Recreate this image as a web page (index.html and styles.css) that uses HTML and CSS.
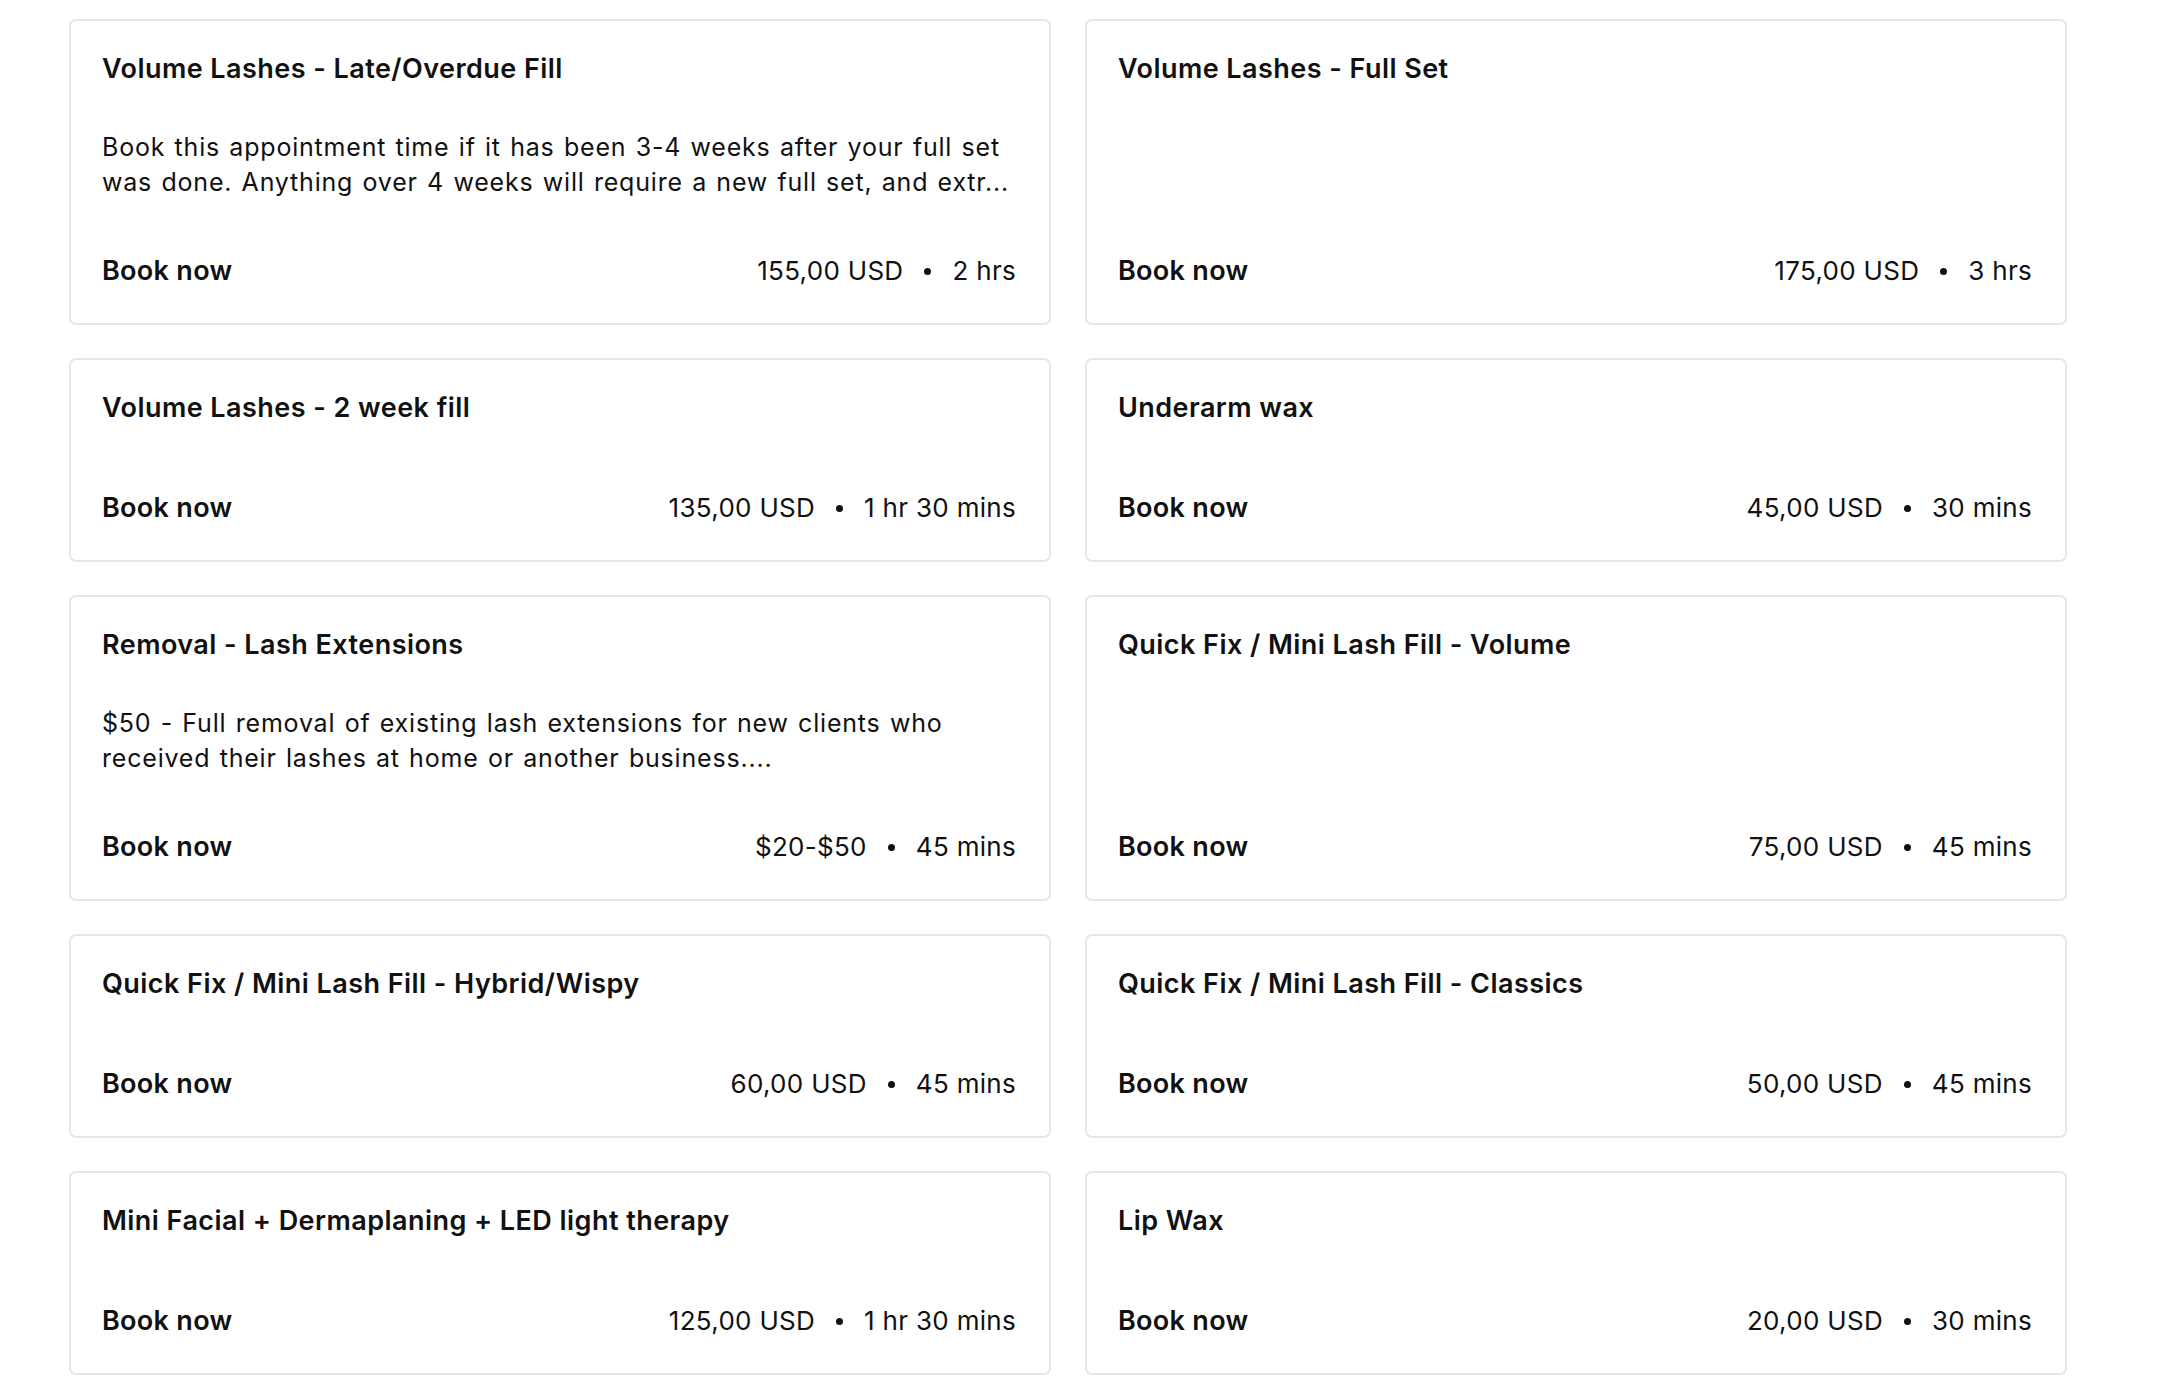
FILE: index.html
```html
<!DOCTYPE html>
<html>
<head>
<meta charset="utf-8">
<link rel="stylesheet" href="styles.css">
</head>
<body>
<div class="grid">
  <div class="card">
    <div class="title">Volume Lashes - Late/Overdue Fill</div>
    <div class="desc">Book this appointment time if it has been 3-4 weeks after your full set was done. Anything over 4 weeks will require a new full set, and extr...</div>
    <div class="footer"><span class="book">Book now</span><span class="meta">155,00 USD<span class="dot"></span>2 hrs</span></div>
  </div>
  <div class="card">
    <div class="title">Volume Lashes - Full Set</div>
    <div class="desc empty"></div>
    <div class="footer"><span class="book">Book now</span><span class="meta">175,00 USD<span class="dot"></span>3 hrs</span></div>
  </div>
  <div class="card">
    <div class="title">Volume Lashes - 2 week fill</div>
    <div class="footer"><span class="book">Book now</span><span class="meta">135,00 USD<span class="dot"></span>1 hr 30 mins</span></div>
  </div>
  <div class="card">
    <div class="title">Underarm wax</div>
    <div class="footer"><span class="book">Book now</span><span class="meta">45,00 USD<span class="dot"></span>30 mins</span></div>
  </div>
  <div class="card">
    <div class="title">Removal - Lash Extensions</div>
    <div class="desc">$50 - Full removal of existing lash extensions for new clients who received their lashes at home or another business....</div>
    <div class="footer"><span class="book">Book now</span><span class="meta">$20-$50<span class="dot"></span>45 mins</span></div>
  </div>
  <div class="card">
    <div class="title">Quick Fix / Mini Lash Fill - Volume</div>
    <div class="desc empty"></div>
    <div class="footer"><span class="book">Book now</span><span class="meta">75,00 USD<span class="dot"></span>45 mins</span></div>
  </div>
  <div class="card">
    <div class="title">Quick Fix / Mini Lash Fill - Hybrid/Wispy</div>
    <div class="footer"><span class="book">Book now</span><span class="meta">60,00 USD<span class="dot"></span>45 mins</span></div>
  </div>
  <div class="card">
    <div class="title">Quick Fix / Mini Lash Fill - Classics</div>
    <div class="footer"><span class="book">Book now</span><span class="meta">50,00 USD<span class="dot"></span>45 mins</span></div>
  </div>
  <div class="card">
    <div class="title">Mini Facial + Dermaplaning + LED light therapy</div>
    <div class="footer"><span class="book">Book now</span><span class="meta">125,00 USD<span class="dot"></span>1 hr 30 mins</span></div>
  </div>
  <div class="card">
    <div class="title">Lip Wax</div>
    <div class="footer"><span class="book">Book now</span><span class="meta">20,00 USD<span class="dot"></span>30 mins</span></div>
  </div>
</div>
</body>
</html>
```
FILE: styles.css
```css
html, body {
  margin: 0;
  padding: 0;
  background: #ffffff;
}
body {
  font-family: "Inter", "Liberation Sans", sans-serif;
  color: #111111;
}
.grid {
  display: grid;
  grid-template-columns: 982px 982px;
  column-gap: 34px;
  row-gap: 33px;
  margin: 19px 0 0 69px;
  width: 1998px;
  align-items: start;
}
.card {
  border: 2px solid #e6e6e6;
  border-radius: 7px;
  padding: 30px 33px 35px 31px;
  display: flex;
  flex-direction: column;
}
.title {
  font-size: 27px;
  font-weight: 600;
  line-height: 35px;
  letter-spacing: 0.45px;
  white-space: nowrap;
}
.desc {
  margin-top: 44px;
  font-size: 25px;
  line-height: 35px;
  letter-spacing: 0.8px;
  word-spacing: 1.5px;
  height: 70px;
  overflow: hidden;
}
.footer {
  margin-top: 66px;
  display: flex;
  justify-content: space-between;
  align-items: center;
  line-height: 34px;
}
.desc + .footer {
  margin-top: 54px;
}
.book {
  font-size: 27px;
  font-weight: 600;
  letter-spacing: 0.3px;
}
.meta {
  font-size: 26px;
  font-weight: 400;
  letter-spacing: 0.3px;
  display: flex;
  align-items: center;
}
.dot {
  display: inline-block;
  width: 7px;
  height: 7px;
  border-radius: 50%;
  background: #111111;
  margin: 0 21px;
}
```
